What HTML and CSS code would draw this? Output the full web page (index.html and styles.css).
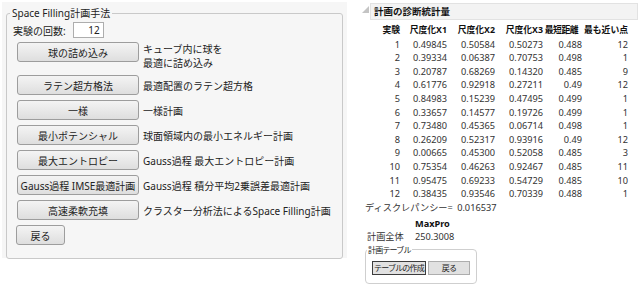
FILE: index.html
```html
<!DOCTYPE html>
<html>

<head>
    <title>Space Filling計画</title>
    <link rel="stylesheet" href="styles.css">
</head>

<body>
    <main class="page">
        <div class="dialog">
            <fieldset class="group">
                <legend>Space Filling計画手法</legend>
                <div class="runs">
                    <span>実験の回数:</span>
                    <span class="num-box">12</span>
                </div>
                <div class="methods">
                    <div class="method tall">
                        <button class="btn">球の詰め込み</button>
                        <span class="desc">キューブ内に球を<br>最適に詰め込み</span>
                    </div>
                    <div class="method">
                        <button class="btn">ラテン超方格法</button>
                        <span class="desc">最適配置のラテン超方格</span>
                    </div>
                    <div class="method">
                        <button class="btn">一様</button>
                        <span class="desc">一様計画</span>
                    </div>
                    <div class="method">
                        <button class="btn">最小ポテンシャル</button>
                        <span class="desc">球面領域内の最小エネルギー計画</span>
                    </div>
                    <div class="method">
                        <button class="btn">最大エントロピー</button>
                        <span class="desc">Gauss過程 最大エントロピー計画</span>
                    </div>
                    <div class="method">
                        <button class="btn">Gauss過程 IMSE最適計画</button>
                        <span class="desc">Gauss過程 積分平均2乗誤差最適計画</span>
                    </div>
                    <div class="method">
                        <button class="btn">高速柔軟充填</button>
                        <span class="desc">クラスター分析法によるSpace Filling計画</span>
                    </div>
                </div>
                <button class="btn back">戻る</button>
            </fieldset>
        </div>

        <section class="report">
            <div class="outline-head">
                <svg class="tri" width="7" height="7" viewBox="0 0 7 7">
                    <polygon points="7,0 7,7 0,7" fill="#c4c4c4" />
                </svg>
                <div class="outline-title">計画の診断統計量</div>
            </div>
            <table class="stats">
                <colgroup>
                    <col style="width:38px">
                    <col style="width:47px">
                    <col style="width:48px">
                    <col style="width:48px">
                    <col style="width:39px">
                    <col style="width:46px">
                </colgroup>
                <thead>
                    <tr>
                        <th>実験</th>
                        <th>尺度化X1</th>
                        <th>尺度化X2</th>
                        <th>尺度化X3</th>
                        <th class="mid">最短距離</th>
                        <th>最も近い点</th>
                    </tr>
                </thead>
                <tbody id="rows"></tbody>
            </table>
            <div class="disc">ディスクレパンシー= <span class="val">0.016537</span></div>
            <div class="maxpro">
                <span></span><b>MaxPro</b>
                <span>計画全体</span><span>250.3008</span>
            </div>
            <fieldset class="group small">
                <legend>計画テーブル</legend>
                <div class="table-btns">
                    <button class="flat default">テーブルの作成</button>
                    <button class="flat wide">戻る</button>
                </div>
            </fieldset>
        </section>
    </main>
    <script>
        !function () {
            const data = [
                [1, "0.49845", "0.50584", "0.50273", "0.488", 12],
                [2, "0.39334", "0.06387", "0.70753", "0.498", 1],
                [3, "0.20787", "0.68269", "0.14320", "0.485", 9],
                [4, "0.61776", "0.92918", "0.27211", "0.49", 12],
                [5, "0.84983", "0.15239", "0.47495", "0.499", 1],
                [6, "0.33657", "0.14577", "0.19726", "0.499", 1],
                [7, "0.73480", "0.45365", "0.06714", "0.498", 1],
                [8, "0.26209", "0.52317", "0.93916", "0.49", 12],
                [9, "0.00665", "0.45300", "0.52058", "0.485", 3],
                [10, "0.75354", "0.46263", "0.92467", "0.485", 11],
                [11, "0.95475", "0.69233", "0.54729", "0.485", 10],
                [12, "0.38435", "0.93546", "0.70339", "0.488", 1]
            ];
            document.getElementById("rows").innerHTML = data
                .map(r => `<tr>${r.map(v => `<td>${v}</td>`).join("")}</tr>`)
                .join("");
        }()
    </script>
</body>

</html>
```

FILE: styles.css
```css
html,
body {
    margin: 0;
    background: #fff;
}

body {
    font-family: "Noto Sans", "Noto Sans CJK JP", sans-serif;
    font-size: 10px;
    color: #222;
}

.page {
    display: flex;
    align-items: flex-start;
}

/* left dialog */

.dialog {
    margin: 2px 0 0 2px;
    width: 345px;
    height: 256px;
    box-sizing: border-box;
    padding: 5px 4px 0 4px;
    background: #f6f6f6;
}

.group {
    margin: 0;
    border: 1px solid #c9c9c9;
    border-radius: 3px;
    padding: 0 6px 13px 6px;
}

.group legend {
    margin-left: -3px;
    padding: 0 2px;
    line-height: 13px;
}

.runs {
    display: flex;
    align-items: center;
    margin-top: 2px;
    height: 16px;
}

.num-box {
    margin-left: 7px;
    width: 31px;
    height: 16px;
    box-sizing: border-box;
    border: 1px solid #adadad;
    background: #fff;
    text-align: right;
    padding-right: 3px;
    line-height: 14px;
}

.methods {
    display: flex;
    flex-direction: column;
    gap: 5px;
    margin: 4px 0 0 4px;
}

.method {
    display: flex;
    align-items: center;
    gap: 4px;
}

.method.tall {
    align-items: flex-start;
    height: 28px;
}

.method.tall .desc {
    line-height: 14px;
}

.desc {
    white-space: nowrap;
}

.btn {
    font: inherit;
    color: #222;
    height: 20px;
    width: 122px;
    padding: 0;
    border: 1px solid #9d9d9d;
    border-radius: 3px;
    background: linear-gradient(#f4f4f4, #dedede);
    white-space: nowrap;
}

.btn.back {
    display: block;
    width: 49px;
    margin: 5px 0 0 3px;
}

/* right report */

.report {
    margin-left: 15px;
    width: 276px;
}

.outline-head {
    display: flex;
    align-items: flex-start;
    margin-top: 3px;
}

.tri {
    margin: 3px 1px 0 0;
}

.outline-title {
    flex: 1;
    height: 17px;
    box-sizing: border-box;
    border: 1px solid #e2e2e2;
    background: #f3f3f3;
    padding-left: 3px;
    font-weight: bold;
    font-size: 9.5px;
    line-height: 15px;
    color: #111;
}

.stats {
    table-layout: fixed;
    border-collapse: collapse;
    margin-top: 4px;
    font-size: 9.2px;
}

.stats th,
.stats td {
    padding: 0;
    height: 13.6px;
    line-height: 13.6px;
    text-align: right;
    white-space: nowrap;
}

.stats th {
    font-weight: bold;
    font-size: 8.8px;
    color: #111;
}

.stats th.mid {
    padding-right: 4px;
    letter-spacing: -0.5px;
}

.stats td {
    color: #333;
}

.disc {
    margin: 0 0 0 3px;
    font-size: 9.2px;
    line-height: 13px;
    color: #333;
}

.disc .val {
    margin-left: 2px;
}

.maxpro {
    display: grid;
    grid-template-columns: 48px auto;
    margin: 3px 0 0 5px;
    font-size: 9.2px;
    line-height: 13.5px;
    color: #333;
}

.maxpro b {
    color: #111;
}

.group.small {
    width: 112px;
    box-sizing: border-box;
    margin: 0 0 0 3px;
    padding: 5px 6px 8px 6px;
    border-color: #cfcfcf;
    border-radius: 4px;
    font-size: 8px;
    letter-spacing: -0.8px;
}

.group.small legend {
    margin-left: -5px;
    padding: 0 1px;
    line-height: 12px;
}

.table-btns {
    display: flex;
    gap: 2px;
}

.flat {
    font: inherit;
    letter-spacing: inherit;
    color: #222;
    height: 14px;
    width: 54px;
    padding: 0;
    border: 1px solid #adadad;
    background: #e1e1e1;
    line-height: 12px;
    white-space: nowrap;
}

.flat.default {
    border-color: #3c3c3c;
}

.flat.wide {
    width: 42px;
}
```
